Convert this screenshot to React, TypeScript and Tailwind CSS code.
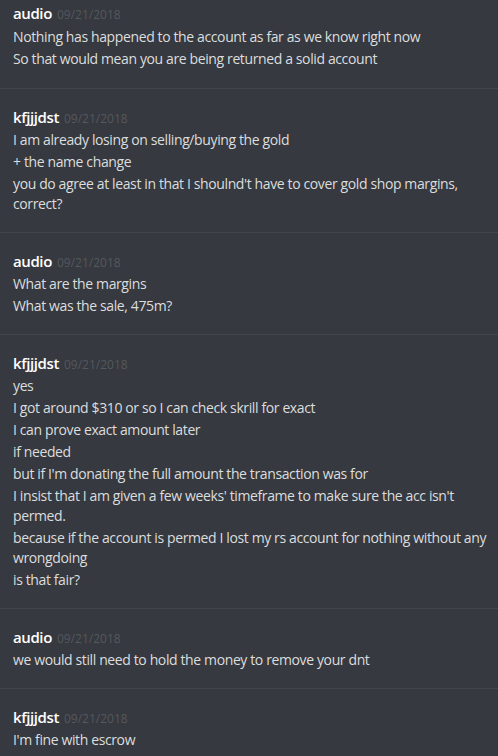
import React from "react";

type Group = {
  user: string;
  time: string;
  lines: string[];
};

const groups: Group[] = [
  {
    user: "audio",
    time: "09/21/2018",
    lines: [
      "Nothing has happened to the account as far as we know right now",
      "So that would mean you are being returned a solid account",
    ],
  },
  {
    user: "kfjjjdst",
    time: "09/21/2018",
    lines: [
      "I am already losing on selling/buying the gold",
      "+ the name change",
      "you do agree at least in that I shoulnd't have to cover gold shop margins, correct?",
    ],
  },
  {
    user: "audio",
    time: "09/21/2018",
    lines: ["What are the margins", "What was the sale, 475m?"],
  },
  {
    user: "kfjjjdst",
    time: "09/21/2018",
    lines: [
      "yes",
      "I got around $310 or so I can check skrill for exact",
      "I can prove exact amount later",
      "if needed",
      "but if I'm donating the full amount the transaction was for",
      "I insist that I am given a few weeks' timeframe to make sure the acc isn't permed.",
      "because if the account is permed I lost my rs account for nothing without any wrongdoing",
      "is that fair?",
    ],
  },
  {
    user: "audio",
    time: "09/21/2018",
    lines: ["we would still need to hold the money to remove your dnt"],
  },
  {
    user: "kfjjjdst",
    time: "09/21/2018",
    lines: ["I'm fine with escrow"],
  },
];

export default function App() {
  return (
    <div
      className="h-[756px] w-[498px] overflow-hidden bg-[#36393f]"
      style={{ fontFamily: '"Open Sans", "Noto Sans", sans-serif' }}
    >
      {groups.map((group, i) => (
        <div
          key={i}
          className={
            i === 0
              ? "pl-[13px] pr-[6px] pt-[3px] pb-[19px]"
              : "border-t border-[#42454a] pl-[13px] pr-[6px] pt-[18px] pb-[18px]"
          }
        >
          <div className="flex items-baseline gap-[5px] leading-[20px]">
            <span className="text-[15px] font-semibold tracking-[-0.4px] text-white">
              {group.user}
            </span>
            <span className="text-[12px] text-[#55585d]">{group.time}</span>
          </div>
          <div className={i === 0 ? "mt-[2px] flex flex-col gap-[2px]" : "mt-[1px] flex flex-col gap-[2px]"}>
            {group.lines.map((line, j) => (
              <div
                key={j}
                className="text-[14px] leading-[20px] tracking-[-0.38px] text-[#dcddde]"
              >
                {line}
              </div>
            ))}
          </div>
        </div>
      ))}
    </div>
  );
}
